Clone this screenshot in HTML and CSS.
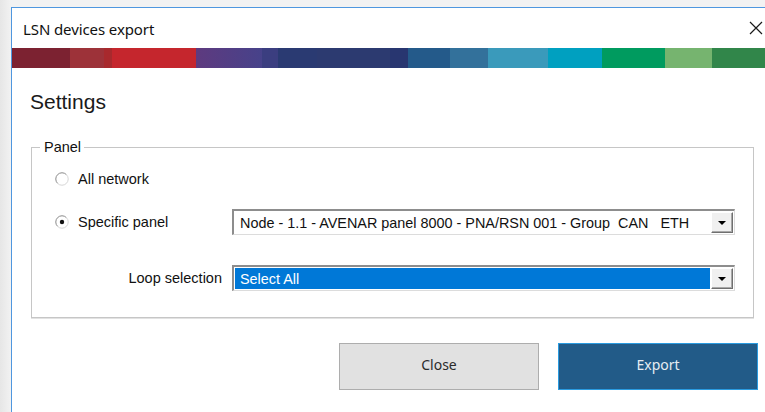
FILE: index.html
```html
<!DOCTYPE html>
<html lang="en">
<head>
<meta charset="utf-8">
<title>LSN devices export</title>
<link rel="stylesheet" href="styles.css">
</head>
<body>
<div class="desktop">
  <div class="window">
    <div class="titlebar">
      <span class="title">LSN devices export</span>
      <svg class="close-x" width="14" height="14" viewBox="0 0 14 14" aria-hidden="true">
        <path d="M1 1 L13 13 M13 1 L1 13" stroke="#1a1a1a" stroke-width="1.2" fill="none"/>
      </svg>
    </div>
    <div class="brandbar"></div>

    <div class="content">
      <h1 class="heading">Settings</h1>

      <fieldset class="group">
        <legend class="group-title">Panel</legend>

        <div class="row row-first">
          <label class="radio">
            <svg class="radio-mark" width="14" height="14" viewBox="0 0 14 14" aria-hidden="true">
              <circle cx="7" cy="7" r="6.2" fill="#fff"/>
              <path d="M2.6 11.4 A6.2 6.2 0 0 1 11.4 2.6" stroke="#8a8a8a" stroke-width="1" fill="none"/>
              <path d="M11.4 2.6 A6.2 6.2 0 0 1 2.6 11.4" stroke="#d6d6d6" stroke-width="1" fill="none"/>
            </svg>
            <span>All network</span>
          </label>
        </div>

        <div class="row row-panel">
          <label class="radio label-col">
            <svg class="radio-mark" width="14" height="14" viewBox="0 0 14 14" aria-hidden="true">
              <circle cx="7" cy="7" r="6.2" fill="#fff"/>
              <path d="M2.6 11.4 A6.2 6.2 0 0 1 11.4 2.6" stroke="#8a8a8a" stroke-width="1" fill="none"/>
              <path d="M11.4 2.6 A6.2 6.2 0 0 1 2.6 11.4" stroke="#d6d6d6" stroke-width="1" fill="none"/>
              <circle cx="7" cy="7" r="2.2" fill="#111"/>
            </svg>
            <span>Specific panel</span>
          </label>
          <div class="combo">
            <span class="combo-value">Node - 1.1 - AVENAR panel 8000 - PNA/RSN 001 - Group&nbsp; CAN &nbsp; ETH</span>
            <span class="combo-button"><span class="caret"></span></span>
          </div>
        </div>

        <div class="row row-loop">
          <span class="label-col label-right">Loop selection</span>
          <div class="combo combo-focused">
            <span class="combo-value">Select All</span>
            <span class="combo-button"><span class="caret"></span></span>
          </div>
        </div>
      </fieldset>

      <div class="actions">
        <button class="btn btn-secondary" type="button">Close</button>
        <button class="btn btn-primary" type="button">Export</button>
      </div>
    </div>
  </div>
</div>
</body>
</html>
```

FILE: styles.css
```css
* {
  box-sizing: border-box;
}

html,
body {
  margin: 0;
  padding: 0;
}

body {
  width: 765px;
  height: 412px;
  overflow: hidden;
  font-family: "Liberation Sans", Arial, sans-serif;
  color: #111;
}

/* shaded area around the dialog */
.desktop {
  height: 412px;
  padding: 7px 0 0 11px;
  background: linear-gradient(90deg, #e6e6e6 0, #f2f2f2 11px);
}

.window {
  height: 100%;
  background: #fff;
  border-top: 1px solid #4f97df;
  border-left: 1px solid #4f97df;
}

.titlebar {
  height: 40px;
  display: flex;
  align-items: center;
  justify-content: space-between;
  padding: 0 2px 0 11px;
}

.title {
  font-family: "Noto Sans", "Open Sans", sans-serif;
  font-size: 15px;
  color: #111;
  letter-spacing: -0.1px;
  margin-top: 1px;
}

.close-x {
  margin-bottom: 1px;
}

/* corporate colour ribbon */
.brandbar {
  height: 20px;
  background: linear-gradient(90deg,
    #7c2231 0, #7c2231 58px,
    #9d3239 58px, #9d3239 92px,
    #a8292d 92px, #a8292d 100px,
    #c5262d 100px, #c5262d 184px,
    #5e3a7f 184px, #47428a 250px,
    #3b3e80 250px, #3b3e80 266px,
    #2a3a72 266px, #2a3a72 305px,
    #2c3a70 305px, #2c3a70 378px,
    #283670 378px, #283670 396px,
    #245a8a 396px, #245a8a 438px,
    #33719b 438px, #33719b 476px,
    #3a9abb 476px, #3a9abb 536px,
    #00a0c0 536px, #00a0c0 590px,
    #009b5f 590px, #009b5f 653px,
    #76b46f 653px, #76b46f 700px,
    #31864a 700px, #31864a 760px);
}

.content {
  padding: 22px 0 0 18px;
}

.heading {
  margin: 0;
  height: 34px;
  font-family: "Liberation Sans", Arial, sans-serif;
  font-weight: normal;
  font-size: 21px;
  line-height: 24px;
  color: #1a1a1a;
}

.group {
  margin: 15px 11px 0 1px;
  padding: 0 0 26px 0;
  border: 1px solid #c6c6c6;
  box-shadow: 0 1px 0 #e2e2e2;
  min-width: 0;
}

.group-title {
  margin-left: 8px;
  padding: 0 3px 0 4px;
  font-size: 14.5px;
  line-height: 16px;
  color: #111;
}

.row {
  display: flex;
  align-items: center;
  font-size: 14.5px;
}

.row-first {
  margin-top: 12px;
  height: 24px;
}

.row-panel {
  margin-top: 18px;
  height: 26px;
}

.row-loop {
  margin-top: 30px;
  height: 26px;
}

.radio {
  display: flex;
  align-items: center;
  gap: 9px;
  padding-left: 23px;
}

.radio-mark {
  flex: none;
}

.label-col {
  width: 200px;
  flex: none;
}

.label-right {
  text-align: right;
  padding-right: 10px;
}

.combo {
  flex: none;
  width: 503px;
  height: 26px;
  display: flex;
  align-items: center;
  background: #fff;
  border-top: 2px solid #8d8d8d;
  border-left: 2px solid #8d8d8d;
  border-right: 1px solid #dcdcdc;
  border-bottom: 1px solid #dcdcdc;
  padding: 1px;
}

.combo-value {
  flex: 1;
  height: 100%;
  display: flex;
  align-items: center;
  padding-left: 5px;
  white-space: nowrap;
  overflow: hidden;
  font-size: 14.4px;
  color: #111;
}

.combo-focused .combo-value {
  background: #0078d7;
  color: #fff;
  margin-right: 1px;
}

.combo-button {
  flex: none;
  width: 22px;
  height: 21px;
  display: flex;
  align-items: center;
  justify-content: center;
  background: #f0f0f0;
  border-top: 1px solid #fff;
  border-left: 1px solid #fff;
  border-right: 1px solid #6f6f6f;
  border-bottom: 1px solid #6f6f6f;
  box-shadow: inset -1px -1px 0 #a8a8a8;
}

.caret {
  width: 0;
  height: 0;
  border-left: 4px solid transparent;
  border-right: 4px solid transparent;
  border-top: 4px solid #000;
  margin-top: 1px;
}

.actions {
  display: flex;
  justify-content: flex-end;
  gap: 19px;
  margin-top: 25px;
  padding-right: 7px;
}

.btn {
  width: 200px;
  height: 47px;
  padding: 0 0 4px;
  font-family: "Noto Sans", "Open Sans", sans-serif;
  font-size: 14px;
  cursor: default;
}

.btn-secondary {
  background: #e1e1e1;
  border: 1px solid #adadad;
  color: #2b2b2b;
}

.btn-primary {
  background: #225b88;
  border: 1px solid #2a9be0;
  color: #e6edf3;
}
```
